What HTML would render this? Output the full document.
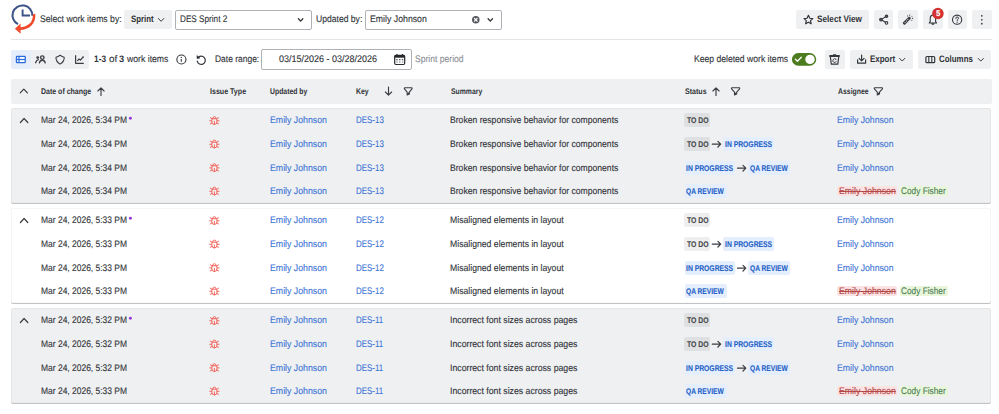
<!DOCTYPE html>
<html><head><meta charset="utf-8"><style>
html,body{margin:0;padding:0;background:#fff;width:999px;height:414px;overflow:hidden;position:relative}
div,svg{position:absolute;box-sizing:border-box}
span{position:absolute;font-family:"Liberation Sans",sans-serif;white-space:nowrap;transform-origin:0 0}
</style></head><body>
<div style="left:11.00px;top:38.60px;width:980.50px;height:1.00px;background:#e3e4e6"></div><div style="left:124.00px;top:10.00px;width:48.00px;height:19.20px;background:#eff0f2;border-radius:2px"></div><div style="left:174.70px;top:10.00px;width:137.10px;height:19.50px;border:1px solid #aeb1b6;border-radius:2px"></div><div style="left:365.00px;top:10.00px;width:136.80px;height:19.50px;border:1px solid #aeb1b6;border-radius:2px"></div><div style="left:796.00px;top:10.00px;width:72.60px;height:19.40px;background:#eff0f2;border-radius:2px"></div><div style="left:873.90px;top:10.00px;width:19.60px;height:19.40px;background:#eff0f2;border-radius:2px"></div><div style="left:898.40px;top:10.00px;width:19.60px;height:19.40px;background:#eff0f2;border-radius:2px"></div><div style="left:923.00px;top:10.00px;width:19.60px;height:19.40px;background:#eff0f2;border-radius:2px"></div><div style="left:947.50px;top:10.00px;width:19.60px;height:19.40px;background:#eff0f2;border-radius:2px"></div><div style="left:972.00px;top:10.00px;width:19.60px;height:19.40px;background:#eff0f2;border-radius:2px"></div><div style="left:11.10px;top:49.80px;width:77.80px;height:19.10px;background:#eff0f2;border-radius:2px"></div><div style="left:11.10px;top:49.80px;width:19.60px;height:19.10px;background:#e6eefb;border-radius:2px 0 0 2px"></div><div style="left:260.90px;top:49.40px;width:151.30px;height:20.20px;border:1px solid #aeb1b6;border-radius:2px"></div><div style="left:825.00px;top:49.80px;width:19.50px;height:19.20px;background:#eff0f2;border-radius:2px"></div><div style="left:849.90px;top:49.80px;width:63.00px;height:19.10px;background:#eff0f2;border-radius:2px"></div><div style="left:918.00px;top:49.80px;width:73.20px;height:19.10px;background:#eff0f2;border-radius:2px"></div><div style="left:11.10px;top:79.30px;width:980.60px;height:24.30px;background:#eff0f2;border-radius:2px"></div><div style="left:11.00px;top:108.40px;width:980.00px;height:94.80px;background:#eff0f2;border:1px solid rgba(0,0,0,0.04);border-bottom:1px solid rgba(0,0,0,0.02);border-radius:2px;box-shadow:0 1px 0 #c0c2c6"></div><div style="left:684.40px;top:113.10px;width:25.80px;height:14.40px;background:rgba(0,0,0,0.065);border-radius:2px"></div><div style="left:684.40px;top:137.10px;width:25.80px;height:14.40px;background:rgba(0,0,0,0.065);border-radius:2px"></div><div style="left:722.90px;top:137.10px;width:50.80px;height:14.40px;background:#e5eefc;border-radius:2px"></div><div style="left:684.50px;top:161.10px;width:50.80px;height:14.40px;background:#e5eefc;border-radius:2px"></div><div style="left:748.20px;top:161.10px;width:42.10px;height:14.40px;background:#e5eefc;border-radius:2px"></div><div style="left:684.50px;top:184.10px;width:42.10px;height:14.40px;background:#e5eefc;border-radius:2px"></div><div style="left:837.40px;top:185.80px;width:59.60px;height:10.20px;background:#fbe3e3;border-radius:2px"></div><div style="left:899.60px;top:185.80px;width:48.20px;height:10.20px;background:#eaf6da;border-radius:2px"></div><div style="left:11.00px;top:208.40px;width:980.00px;height:94.80px;background:#ffffff;border:1px solid rgba(0,0,0,0.04);border-bottom:1px solid rgba(0,0,0,0.02);border-radius:2px;box-shadow:0 1px 0 #c0c2c6"></div><div style="left:684.40px;top:213.10px;width:25.80px;height:14.40px;background:rgba(0,0,0,0.065);border-radius:2px"></div><div style="left:684.40px;top:237.10px;width:25.80px;height:14.40px;background:rgba(0,0,0,0.065);border-radius:2px"></div><div style="left:722.90px;top:237.10px;width:50.80px;height:14.40px;background:#e5eefc;border-radius:2px"></div><div style="left:684.50px;top:261.10px;width:50.80px;height:14.40px;background:#e5eefc;border-radius:2px"></div><div style="left:748.20px;top:261.10px;width:42.10px;height:14.40px;background:#e5eefc;border-radius:2px"></div><div style="left:684.50px;top:284.10px;width:42.10px;height:14.40px;background:#e5eefc;border-radius:2px"></div><div style="left:837.40px;top:285.80px;width:59.60px;height:10.20px;background:#fbe3e3;border-radius:2px"></div><div style="left:899.60px;top:285.80px;width:48.20px;height:10.20px;background:#eaf6da;border-radius:2px"></div><div style="left:11.00px;top:308.40px;width:980.00px;height:94.80px;background:#eff0f2;border:1px solid rgba(0,0,0,0.04);border-bottom:1px solid rgba(0,0,0,0.02);border-radius:2px;box-shadow:0 1px 0 #c0c2c6"></div><div style="left:684.40px;top:313.10px;width:25.80px;height:14.40px;background:rgba(0,0,0,0.065);border-radius:2px"></div><div style="left:684.40px;top:337.10px;width:25.80px;height:14.40px;background:rgba(0,0,0,0.065);border-radius:2px"></div><div style="left:722.90px;top:337.10px;width:50.80px;height:14.40px;background:#e5eefc;border-radius:2px"></div><div style="left:684.50px;top:361.10px;width:50.80px;height:14.40px;background:#e5eefc;border-radius:2px"></div><div style="left:748.20px;top:361.10px;width:42.10px;height:14.40px;background:#e5eefc;border-radius:2px"></div><div style="left:684.50px;top:384.10px;width:42.10px;height:14.40px;background:#e5eefc;border-radius:2px"></div><div style="left:837.40px;top:385.80px;width:59.60px;height:10.20px;background:#fbe3e3;border-radius:2px"></div><div style="left:899.60px;top:385.80px;width:48.20px;height:10.20px;background:#eaf6da;border-radius:2px"></div>
<svg width="999" height="414" style="left:0;top:0"><path d="M20.40 122.50 L24.10 118.50 L27.80 122.50" fill="none" stroke="#3a3d42" stroke-width="1.2" stroke-linecap="round" stroke-linejoin="round"/><circle cx="130.4" cy="118.30" r="1.45" fill="#9b35d6"/><path d="M712.3 144.2 L720.4000000000001 144.2 M717.9000000000001 141.39999999999998 L720.7 144.2 L717.9000000000001 147.0" fill="none" stroke="#3a3d42" stroke-width="1.2" stroke-linecap="round" stroke-linejoin="round"/><path d="M737.5 168.2 L745.5 168.2 M743.0 165.39999999999998 L745.8 168.2 L743.0 171.0" fill="none" stroke="#3a3d42" stroke-width="1.2" stroke-linecap="round" stroke-linejoin="round"/><g transform="translate(208.16 114.05) scale(0.52)" fill="none" stroke="#f0625a" stroke-width="1.85" stroke-linecap="round" stroke-linejoin="round"><path d="M9 9v-1a3 3 0 0 1 6 0v1"/><path d="M8 9h8a6 6 0 0 1 1 3v3a5 5 0 0 1 -10 0v-3a6 6 0 0 1 1 -3"/><path d="M3 13h4M17 13h4M12 20v-6M4 19l3.35 -2M20 19l-3.35 -2M4 7l3.75 2.4M20 7l-3.75 2.4"/></g><g transform="translate(208.16 137.50) scale(0.52)" fill="none" stroke="#f0625a" stroke-width="1.85" stroke-linecap="round" stroke-linejoin="round"><path d="M9 9v-1a3 3 0 0 1 6 0v1"/><path d="M8 9h8a6 6 0 0 1 1 3v3a5 5 0 0 1 -10 0v-3a6 6 0 0 1 1 -3"/><path d="M3 13h4M17 13h4M12 20v-6M4 19l3.35 -2M20 19l-3.35 -2M4 7l3.75 2.4M20 7l-3.75 2.4"/></g><g transform="translate(208.16 161.10) scale(0.52)" fill="none" stroke="#f0625a" stroke-width="1.85" stroke-linecap="round" stroke-linejoin="round"><path d="M9 9v-1a3 3 0 0 1 6 0v1"/><path d="M8 9h8a6 6 0 0 1 1 3v3a5 5 0 0 1 -10 0v-3a6 6 0 0 1 1 -3"/><path d="M3 13h4M17 13h4M12 20v-6M4 19l3.35 -2M20 19l-3.35 -2M4 7l3.75 2.4M20 7l-3.75 2.4"/></g><g transform="translate(208.16 184.50) scale(0.52)" fill="none" stroke="#f0625a" stroke-width="1.85" stroke-linecap="round" stroke-linejoin="round"><path d="M9 9v-1a3 3 0 0 1 6 0v1"/><path d="M8 9h8a6 6 0 0 1 1 3v3a5 5 0 0 1 -10 0v-3a6 6 0 0 1 1 -3"/><path d="M3 13h4M17 13h4M12 20v-6M4 19l3.35 -2M20 19l-3.35 -2M4 7l3.75 2.4M20 7l-3.75 2.4"/></g><path d="M20.40 222.50 L24.10 218.50 L27.80 222.50" fill="none" stroke="#3a3d42" stroke-width="1.2" stroke-linecap="round" stroke-linejoin="round"/><circle cx="130.4" cy="218.30" r="1.45" fill="#9b35d6"/><path d="M712.3 244.2 L720.4000000000001 244.2 M717.9000000000001 241.39999999999998 L720.7 244.2 L717.9000000000001 247.0" fill="none" stroke="#3a3d42" stroke-width="1.2" stroke-linecap="round" stroke-linejoin="round"/><path d="M737.5 268.2 L745.5 268.2 M743.0 265.4 L745.8 268.2 L743.0 271.0" fill="none" stroke="#3a3d42" stroke-width="1.2" stroke-linecap="round" stroke-linejoin="round"/><g transform="translate(208.16 214.05) scale(0.52)" fill="none" stroke="#f0625a" stroke-width="1.85" stroke-linecap="round" stroke-linejoin="round"><path d="M9 9v-1a3 3 0 0 1 6 0v1"/><path d="M8 9h8a6 6 0 0 1 1 3v3a5 5 0 0 1 -10 0v-3a6 6 0 0 1 1 -3"/><path d="M3 13h4M17 13h4M12 20v-6M4 19l3.35 -2M20 19l-3.35 -2M4 7l3.75 2.4M20 7l-3.75 2.4"/></g><g transform="translate(208.16 237.50) scale(0.52)" fill="none" stroke="#f0625a" stroke-width="1.85" stroke-linecap="round" stroke-linejoin="round"><path d="M9 9v-1a3 3 0 0 1 6 0v1"/><path d="M8 9h8a6 6 0 0 1 1 3v3a5 5 0 0 1 -10 0v-3a6 6 0 0 1 1 -3"/><path d="M3 13h4M17 13h4M12 20v-6M4 19l3.35 -2M20 19l-3.35 -2M4 7l3.75 2.4M20 7l-3.75 2.4"/></g><g transform="translate(208.16 261.10) scale(0.52)" fill="none" stroke="#f0625a" stroke-width="1.85" stroke-linecap="round" stroke-linejoin="round"><path d="M9 9v-1a3 3 0 0 1 6 0v1"/><path d="M8 9h8a6 6 0 0 1 1 3v3a5 5 0 0 1 -10 0v-3a6 6 0 0 1 1 -3"/><path d="M3 13h4M17 13h4M12 20v-6M4 19l3.35 -2M20 19l-3.35 -2M4 7l3.75 2.4M20 7l-3.75 2.4"/></g><g transform="translate(208.16 284.50) scale(0.52)" fill="none" stroke="#f0625a" stroke-width="1.85" stroke-linecap="round" stroke-linejoin="round"><path d="M9 9v-1a3 3 0 0 1 6 0v1"/><path d="M8 9h8a6 6 0 0 1 1 3v3a5 5 0 0 1 -10 0v-3a6 6 0 0 1 1 -3"/><path d="M3 13h4M17 13h4M12 20v-6M4 19l3.35 -2M20 19l-3.35 -2M4 7l3.75 2.4M20 7l-3.75 2.4"/></g><path d="M20.40 322.50 L24.10 318.50 L27.80 322.50" fill="none" stroke="#3a3d42" stroke-width="1.2" stroke-linecap="round" stroke-linejoin="round"/><circle cx="130.4" cy="318.30" r="1.45" fill="#9b35d6"/><path d="M712.3 344.2 L720.4000000000001 344.2 M717.9000000000001 341.4 L720.7 344.2 L717.9000000000001 347.0" fill="none" stroke="#3a3d42" stroke-width="1.2" stroke-linecap="round" stroke-linejoin="round"/><path d="M737.5 368.2 L745.5 368.2 M743.0 365.4 L745.8 368.2 L743.0 371.0" fill="none" stroke="#3a3d42" stroke-width="1.2" stroke-linecap="round" stroke-linejoin="round"/><g transform="translate(208.16 314.05) scale(0.52)" fill="none" stroke="#f0625a" stroke-width="1.85" stroke-linecap="round" stroke-linejoin="round"><path d="M9 9v-1a3 3 0 0 1 6 0v1"/><path d="M8 9h8a6 6 0 0 1 1 3v3a5 5 0 0 1 -10 0v-3a6 6 0 0 1 1 -3"/><path d="M3 13h4M17 13h4M12 20v-6M4 19l3.35 -2M20 19l-3.35 -2M4 7l3.75 2.4M20 7l-3.75 2.4"/></g><g transform="translate(208.16 337.50) scale(0.52)" fill="none" stroke="#f0625a" stroke-width="1.85" stroke-linecap="round" stroke-linejoin="round"><path d="M9 9v-1a3 3 0 0 1 6 0v1"/><path d="M8 9h8a6 6 0 0 1 1 3v3a5 5 0 0 1 -10 0v-3a6 6 0 0 1 1 -3"/><path d="M3 13h4M17 13h4M12 20v-6M4 19l3.35 -2M20 19l-3.35 -2M4 7l3.75 2.4M20 7l-3.75 2.4"/></g><g transform="translate(208.16 361.10) scale(0.52)" fill="none" stroke="#f0625a" stroke-width="1.85" stroke-linecap="round" stroke-linejoin="round"><path d="M9 9v-1a3 3 0 0 1 6 0v1"/><path d="M8 9h8a6 6 0 0 1 1 3v3a5 5 0 0 1 -10 0v-3a6 6 0 0 1 1 -3"/><path d="M3 13h4M17 13h4M12 20v-6M4 19l3.35 -2M20 19l-3.35 -2M4 7l3.75 2.4M20 7l-3.75 2.4"/></g><g transform="translate(208.16 384.50) scale(0.52)" fill="none" stroke="#f0625a" stroke-width="1.85" stroke-linecap="round" stroke-linejoin="round"><path d="M9 9v-1a3 3 0 0 1 6 0v1"/><path d="M8 9h8a6 6 0 0 1 1 3v3a5 5 0 0 1 -10 0v-3a6 6 0 0 1 1 -3"/><path d="M3 13h4M17 13h4M12 20v-6M4 19l3.35 -2M20 19l-3.35 -2M4 7l3.75 2.4M20 7l-3.75 2.4"/></g><g fill="none" stroke-linecap="butt"><path d="M18.0 24.2 A9.9 9.9 0 1 1 32.3 15.8" stroke="#3b5387" stroke-width="2.0"/><path d="M22.6 9.4 L22.6 15.5 L30.0 15.5" stroke="#3b5387" stroke-width="1.9"/><path d="M34.0 14.0 C35.0 22.6 28.6 28.6 19.8 28.6" stroke="#f04b2c" stroke-width="2.6"/></g><path d="M14.9 28.7 L20.6 23.4 L20.6 33.8 Z" fill="#f04b2c"/><path d="M158.40 18.50 L161.10 21.30 L163.80 18.50" fill="none" stroke="#3a3d42" stroke-width="1.0" stroke-linecap="round" stroke-linejoin="round"/><path d="M298.40 18.70 L300.60 21.10 L302.80 18.70" fill="none" stroke="#2e3135" stroke-width="1.3" stroke-linecap="round" stroke-linejoin="round"/><circle cx="475.8" cy="19.8" r="3.75" fill="#55585e"/><path d="M474.5 18.5 L477.1 21.1 M477.1 18.5 L474.5 21.1" stroke="#fff" stroke-width="1.25" stroke-linecap="round"/><path d="M488.10 18.70 L490.30 21.10 L492.50 18.70" fill="none" stroke="#2e3135" stroke-width="1.3" stroke-linecap="round" stroke-linejoin="round"/><path d="M808.4 15.3 L809.8 18.3 L812.8 18.6 L810.5 20.7 L811.2 23.8 L808.4 22.2 L805.6 23.8 L806.3 20.7 L804.0 18.6 L807.0 18.3 Z" fill="none" stroke="#2f3237" stroke-width="1.15" stroke-linejoin="round"/><g stroke="#33363b" stroke-width="1.05"><path d="M882.2 18.9 L885.4 17.0 M882.2 20.3 L885.4 22.2" fill="none"/><circle cx="881.0" cy="19.6" r="1.35" fill="#5a5d62"/><circle cx="886.5" cy="16.3" r="1.3" fill="#5a5d62"/><circle cx="886.5" cy="22.9" r="1.3" fill="#eff0f2"/></g><g transform="translate(906.9 20.6) rotate(-45)"><rect x="-4.9" y="-1.45" width="9.6" height="2.9" rx="1.0" fill="#3a3d42"/><g fill="#fff"><circle cx="-2.6" cy="0" r="0.5"/><circle cx="-0.6" cy="0" r="0.5"/><circle cx="1.4" cy="0" r="0.5"/></g></g><g fill="#44474c"><circle cx="907.6" cy="15.9" r="0.55"/><circle cx="909.6" cy="15.1" r="0.6"/><circle cx="911.9" cy="16.2" r="0.55"/><circle cx="912.6" cy="18.4" r="0.6"/><circle cx="911.8" cy="20.3" r="0.55"/></g><path d="M929.2 23.0 L936.6 23.0 L935.6 21.6 L935.6 18.6 C935.6 16.4 934.4 15.1 932.9 15.1 C931.4 15.1 930.2 16.4 930.2 18.6 L930.2 21.6 Z" fill="none" stroke="#33363b" stroke-width="1.1" stroke-linejoin="round"/><path d="M931.6 23.8 Q932.9 25.2 934.2 23.8 Z" fill="#33363b" stroke="#33363b" stroke-width="0.8"/><circle cx="937.9" cy="13.5" r="5.75" fill="#d3302f"/><circle cx="957.1" cy="19.7" r="4.6" fill="none" stroke="#33363b" stroke-width="1.1"/><path d="M955.8 18.5 Q955.8 16.9 957.15 16.9 Q958.5 16.9 958.5 18.2 Q958.5 19.0 957.7 19.4 Q957.15 19.8 957.15 20.6" fill="none" stroke="#33363b" stroke-width="1.0" stroke-linecap="round"/><circle cx="957.15" cy="22.2" r="0.6" fill="#33363b"/><g fill="#33363b"><circle cx="981.8" cy="15.8" r="0.85"/><circle cx="981.8" cy="19.75" r="0.85"/><circle cx="981.8" cy="23.7" r="0.85"/></g><rect x="15.8" y="55.8" width="10.1" height="7.4" rx="1.3" fill="#2b6de0"/><g fill="#fff"><rect x="17.1" y="57.0" width="1.3" height="1.9"/><rect x="19.6" y="57.0" width="5.0" height="1.9"/><rect x="17.1" y="60.1" width="1.3" height="1.9"/><rect x="19.6" y="60.1" width="5.0" height="1.9"/></g><g fill="none" stroke="#3a3d42" stroke-width="1.35" stroke-linecap="round"><circle cx="42.3" cy="57.6" r="1.75"/><path d="M39.4 62.9 Q40.0 60.2 42.3 60.2 Q44.6 60.2 45.2 62.9"/><path d="M35.6 62.7 Q36.4 60.2 38.3 59.7"/></g><circle cx="37.7" cy="57.6" r="1.4" fill="#3a3d42"/><path d="M60.1 55.2 Q62.2 56.7 64.2 57.2 Q64.5 61.5 60.1 64.1 Q55.7 61.5 56.0 57.2 Q58.0 56.7 60.1 55.2 Z" fill="none" stroke="#3a3d42" stroke-width="1.1" stroke-linejoin="round"/><path d="M75.6 55.2 L75.6 63.3 L83.8 63.3" fill="none" stroke="#3a3d42" stroke-width="1.2" stroke-linejoin="round"/><path d="M77.3 60.9 L79.1 59.0 L80.5 60.0 L82.6 57.6" fill="none" stroke="#3a3d42" stroke-width="1.2" stroke-linejoin="round"/><circle cx="83.0" cy="57.2" r="0.9" fill="#3a3d42"/><circle cx="181.4" cy="59.5" r="4.55" fill="none" stroke="#33363b" stroke-width="1.1"/><circle cx="181.3" cy="57.4" r="0.65" fill="#33363b"/><path d="M181.3 58.9 L181.3 61.8" stroke="#33363b" stroke-width="1.1"/><path d="M197.8 58.0 A4.1 4.1 0 1 1 197.2 61.2" fill="none" stroke="#33363b" stroke-width="1.2" stroke-linecap="round"/><path d="M196.9 55.6 L197.1 58.6 L199.9 58.0 Z" fill="#33363b" stroke="#33363b" stroke-width="0.6" stroke-linejoin="round"/><rect x="394.7" y="55.3" width="10.0" height="9.2" rx="1.2" fill="none" stroke="#26292d" stroke-width="1.2"/><rect x="394.7" y="55.3" width="10.0" height="2.4" fill="#26292d"/><path d="M396.9 53.9 L396.9 56 M402.5 53.9 L402.5 56" stroke="#26292d" stroke-width="1.2"/><g fill="#3a3d42"><rect x="396.2" y="59.2" width="1.5" height="1.1"/><rect x="399.0" y="59.2" width="1.5" height="1.1"/><rect x="401.8" y="59.2" width="1.5" height="1.1"/><rect x="396.2" y="61.5" width="1.5" height="1.1" fill="#8a8d92"/><rect x="399.0" y="61.5" width="1.5" height="1.1" fill="#8a8d92"/><rect x="401.8" y="61.5" width="1.5" height="1.1" fill="#8a8d92"/></g><rect x="791.9" y="53.1" width="24.3" height="12.6" rx="6.3" fill="#4d7c1e"/><circle cx="810.0" cy="59.4" r="4.7" fill="#fff"/><path d="M795.4 59.3 L797.4 61.2 L801.3 57.3" fill="none" stroke="#fff" stroke-width="1.3" stroke-linecap="round" stroke-linejoin="round"/><rect x="829.2" y="55.1" width="10.7" height="1.9" rx="0.7" fill="#33363b"/><rect x="832.9" y="54.3" width="3.3" height="1.2" rx="0.4" fill="#33363b"/><path d="M830.4 57.0 L831.3 64.2 L837.8 64.2 L838.7 57.0" fill="none" stroke="#33363b" stroke-width="1.2" stroke-linejoin="round"/><path d="M835.9 59.4 A1.8 1.8 0 1 0 836.3 61.2" fill="none" stroke="#33363b" stroke-width="0.9"/><path d="M835.2 58.6 L836.6 59.0 L836.0 60.3 Z" fill="#33363b"/><path d="M857.6 59.8 L857.6 63.2 L865.6 63.2 L865.6 59.8" fill="none" stroke="#33363b" stroke-width="1.2" stroke-linejoin="round" stroke-linecap="round"/><path d="M861.6 55.0 L861.6 60.8 M859.1 58.4 L861.6 60.9 L864.1 58.4" fill="none" stroke="#33363b" stroke-width="1.2" stroke-linecap="round" stroke-linejoin="round"/><path d="M899.60 58.35 L902.20 61.05 L904.80 58.35" fill="none" stroke="#3a3d42" stroke-width="1.0" stroke-linecap="round" stroke-linejoin="round"/><rect x="925.9" y="56.5" width="8.8" height="6.2" rx="1" fill="none" stroke="#33363b" stroke-width="1.2"/><path d="M928.8 56.5 L928.8 62.7 M931.8 56.5 L931.8 62.7" stroke="#33363b" stroke-width="1.1"/><path d="M978.20 58.45 L980.80 61.15 L983.40 58.45" fill="none" stroke="#3a3d42" stroke-width="1.0" stroke-linecap="round" stroke-linejoin="round"/><path d="M20.20 92.90 L23.80 89.10 L27.40 92.90" fill="none" stroke="#3a3d42" stroke-width="1.2" stroke-linecap="round" stroke-linejoin="round"/><path d="M101.0 95.5 L101.0 88.2 M97.9 91.0 L101.0 87.9 L104.1 91.0" fill="none" stroke="#3a3d42" stroke-width="1.15" stroke-linecap="round" stroke-linejoin="round"/><path d="M388.5 87.1 L388.5 94.8 M385.4 92.0 L388.5 95.1 L391.6 92.0" fill="none" stroke="#3a3d42" stroke-width="1.15" stroke-linecap="round" stroke-linejoin="round"/><path d="M404.80 87.80 L411.70 87.80 Q412.40 87.90 412.00 88.90 L409.35 92.07 L409.35 94.10 L407.15 95.00 L407.15 92.07 L404.50 88.90 Q404.10 87.90 404.80 87.80 Z" fill="none" stroke="#3a3d42" stroke-width="1.1" stroke-linejoin="round"/><path d="M407.35 92.80 L409.15 92.40 L409.15 94.10 L407.35 94.80 Z" fill="#3a3d42"/><path d="M716.0 95.5 L716.0 88.2 M712.9 91.0 L716.0 87.9 L719.1 91.0" fill="none" stroke="#3a3d42" stroke-width="1.15" stroke-linecap="round" stroke-linejoin="round"/><path d="M731.90 87.80 L739.30 87.80 Q740.00 87.90 739.60 88.90 L736.70 92.07 L736.70 94.10 L734.50 95.00 L734.50 92.07 L731.60 88.90 Q731.20 87.90 731.90 87.80 Z" fill="none" stroke="#3a3d42" stroke-width="1.1" stroke-linejoin="round"/><path d="M734.70 92.80 L736.50 92.40 L736.50 94.10 L734.70 94.80 Z" fill="#3a3d42"/><path d="M874.70 87.80 L882.10 87.80 Q882.80 87.90 882.40 88.90 L879.50 92.07 L879.50 94.10 L877.30 95.00 L877.30 92.07 L874.40 88.90 Q874.00 87.90 874.70 87.80 Z" fill="none" stroke="#3a3d42" stroke-width="1.1" stroke-linejoin="round"/><path d="M877.50 92.80 L879.30 92.40 L879.30 94.10 L877.50 94.80 Z" fill="#3a3d42"/></svg>
<span style="left:40.13px;top:14px;font-size:9.6px;line-height:9.6px;font-weight:400;color:#303338;transform:matrix(0.9003,0,0.001,1,0,0);-webkit-text-stroke:0.12px currentColor;">Select work items by:</span><span style="left:130.98px;top:14px;font-size:9.4px;line-height:9.4px;font-weight:700;color:#303338;transform:matrix(0.8383,0,0.001,1,0,0);">Sprint</span><span style="left:180.06px;top:14px;font-size:9.6px;line-height:9.6px;font-weight:400;color:#303338;transform:matrix(0.8519,0,0.001,1,0,0);-webkit-text-stroke:0.12px currentColor;">DES Sprint 2</span><span style="left:316.46px;top:14px;font-size:9.6px;line-height:9.6px;font-weight:400;color:#303338;transform:matrix(0.8946,0,0.001,1,0,0);-webkit-text-stroke:0.12px currentColor;">Updated by:</span><span style="left:369.62px;top:14px;font-size:9.6px;line-height:9.6px;font-weight:400;color:#303338;transform:matrix(0.9110,0,0.001,1,0,0);-webkit-text-stroke:0.12px currentColor;">Emily Johnson</span><span style="left:816.87px;top:14px;font-size:9.4px;line-height:9.4px;font-weight:700;color:#303338;transform:matrix(0.8748,0,0.001,1,0,0);">Select View</span><span style="left:94.38px;top:54px;font-size:9.4px;line-height:9.4px;font-weight:700;color:#303338;transform:matrix(0.8892,0,0.001,1,0,0);">1-3</span><span style="left:108.59px;top:54px;font-size:9.6px;line-height:9.6px;font-weight:400;color:#303338;transform:matrix(1.0337,0,0.001,1,0,0);-webkit-text-stroke:0.12px currentColor;">of</span><span style="left:119.15px;top:54px;font-size:9.4px;line-height:9.4px;font-weight:700;color:#303338;transform:matrix(0.9903,0,0.001,1,0,0);">3</span><span style="left:127.14px;top:54px;font-size:9.6px;line-height:9.6px;font-weight:400;color:#303338;transform:matrix(0.9033,0,0.001,1,0,0);-webkit-text-stroke:0.12px currentColor;">work items</span><span style="left:215.24px;top:54px;font-size:9.6px;line-height:9.6px;font-weight:400;color:#303338;transform:matrix(0.8816,0,0.001,1,0,0);-webkit-text-stroke:0.12px currentColor;">Date range:</span><span style="left:278.62px;top:54px;font-size:9.6px;line-height:9.6px;font-weight:400;color:#303338;transform:matrix(0.9362,0,0.001,1,0,0);-webkit-text-stroke:0.12px currentColor;">03/15/2026 - 03/28/2026</span><span style="left:414.93px;top:54px;font-size:9.6px;line-height:9.6px;font-weight:400;color:#8d9096;transform:matrix(0.8938,0,0.001,1,0,0);-webkit-text-stroke:0.12px currentColor;">Sprint period</span><span style="left:693.83px;top:54px;font-size:9.6px;line-height:9.6px;font-weight:400;color:#303338;transform:matrix(0.8955,0,0.001,1,0,0);-webkit-text-stroke:0.12px currentColor;">Keep deleted work items</span><span style="left:869.80px;top:54px;font-size:9.4px;line-height:9.4px;font-weight:700;color:#303338;transform:matrix(0.8477,0,0.001,1,0,0);">Export</span><span style="left:939.25px;top:54px;font-size:9.4px;line-height:9.4px;font-weight:700;color:#303338;transform:matrix(0.8448,0,0.001,1,0,0);">Columns</span><span style="left:41.16px;top:88px;font-size:8.2px;line-height:8.2px;font-weight:700;color:#303338;transform:matrix(0.8543,0,0.001,1,0,0);">Date of change</span><span style="left:209.76px;top:88px;font-size:8.2px;line-height:8.2px;font-weight:700;color:#303338;transform:matrix(0.8646,0,0.001,1,0,0);">Issue Type</span><span style="left:270.38px;top:88px;font-size:8.2px;line-height:8.2px;font-weight:700;color:#303338;transform:matrix(0.8372,0,0.001,1,0,0);">Updated by</span><span style="left:356.37px;top:88px;font-size:8.2px;line-height:8.2px;font-weight:700;color:#303338;transform:matrix(0.8435,0,0.001,1,0,0);">Key</span><span style="left:451.19px;top:88px;font-size:8.2px;line-height:8.2px;font-weight:700;color:#303338;transform:matrix(0.8365,0,0.001,1,0,0);">Summary</span><span style="left:684.89px;top:88px;font-size:8.2px;line-height:8.2px;font-weight:700;color:#303338;transform:matrix(0.8618,0,0.001,1,0,0);">Status</span><span style="left:837.99px;top:88px;font-size:8.2px;line-height:8.2px;font-weight:700;color:#303338;transform:matrix(0.8415,0,0.001,1,0,0);">Assignee</span><span style="left:936.18px;top:9px;font-size:8.3px;line-height:8.3px;font-weight:700;color:#ffffff;transform:matrix(0.9580,0,0.001,1,0,0);-webkit-text-stroke:0.1px currentColor;">5</span><span style="left:686.60px;top:116px;font-size:8.3px;line-height:8.3px;font-weight:700;color:#44474c;transform:matrix(0.8301,0,0.001,1,0,0);-webkit-text-stroke:0.1px currentColor;">TO DO</span><span style="left:686.60px;top:140px;font-size:8.3px;line-height:8.3px;font-weight:700;color:#44474c;transform:matrix(0.8301,0,0.001,1,0,0);-webkit-text-stroke:0.1px currentColor;">TO DO</span><span style="left:724.68px;top:140px;font-size:8.3px;line-height:8.3px;font-weight:700;color:#2260c6;transform:matrix(0.8170,0,0.001,1,0,0);-webkit-text-stroke:0.1px currentColor;">IN PROGRESS</span><span style="left:686.28px;top:164px;font-size:8.3px;line-height:8.3px;font-weight:700;color:#2260c6;transform:matrix(0.8170,0,0.001,1,0,0);-webkit-text-stroke:0.1px currentColor;">IN PROGRESS</span><span style="left:750.19px;top:164px;font-size:8.3px;line-height:8.3px;font-weight:700;color:#2260c6;transform:matrix(0.7989,0,0.001,1,0,0);-webkit-text-stroke:0.1px currentColor;">QA REVIEW</span><span style="left:686.49px;top:187px;font-size:8.3px;line-height:8.3px;font-weight:700;color:#2260c6;transform:matrix(0.7989,0,0.001,1,0,0);-webkit-text-stroke:0.1px currentColor;">QA REVIEW</span><span style="left:40.64px;top:115px;font-size:9.5px;line-height:9.5px;font-weight:400;color:#303338;transform:matrix(0.8902,0,0.001,1,0,0);-webkit-text-stroke:0.12px currentColor;">Mar 24, 2026, 5:34 PM</span><span style="left:269.62px;top:115px;font-size:9.5px;line-height:9.5px;font-weight:400;color:#3d75d6;transform:matrix(0.9206,0,0.001,1,0,0);-webkit-text-stroke:0.12px currentColor;">Emily Johnson</span><span style="left:356.08px;top:115px;font-size:9.5px;line-height:9.5px;font-weight:400;color:#3d75d6;transform:matrix(0.8370,0,0.001,1,0,0);-webkit-text-stroke:0.12px currentColor;">DES-13</span><span style="left:449.93px;top:115px;font-size:9.5px;line-height:9.5px;font-weight:400;color:#303338;transform:matrix(0.9056,0,0.001,1,0,0);-webkit-text-stroke:0.12px currentColor;">Broken responsive behavior for components</span><span style="left:837.12px;top:115px;font-size:9.5px;line-height:9.5px;font-weight:400;color:#3d75d6;transform:matrix(0.9140,0,0.001,1,0,0);-webkit-text-stroke:0.12px currentColor;">Emily Johnson</span><span style="left:40.64px;top:139px;font-size:9.5px;line-height:9.5px;font-weight:400;color:#303338;transform:matrix(0.8902,0,0.001,1,0,0);-webkit-text-stroke:0.12px currentColor;">Mar 24, 2026, 5:34 PM</span><span style="left:269.62px;top:139px;font-size:9.5px;line-height:9.5px;font-weight:400;color:#3d75d6;transform:matrix(0.9206,0,0.001,1,0,0);-webkit-text-stroke:0.12px currentColor;">Emily Johnson</span><span style="left:356.08px;top:139px;font-size:9.5px;line-height:9.5px;font-weight:400;color:#3d75d6;transform:matrix(0.8370,0,0.001,1,0,0);-webkit-text-stroke:0.12px currentColor;">DES-13</span><span style="left:449.93px;top:139px;font-size:9.5px;line-height:9.5px;font-weight:400;color:#303338;transform:matrix(0.9056,0,0.001,1,0,0);-webkit-text-stroke:0.12px currentColor;">Broken responsive behavior for components</span><span style="left:837.12px;top:139px;font-size:9.5px;line-height:9.5px;font-weight:400;color:#3d75d6;transform:matrix(0.9140,0,0.001,1,0,0);-webkit-text-stroke:0.12px currentColor;">Emily Johnson</span><span style="left:40.64px;top:163px;font-size:9.5px;line-height:9.5px;font-weight:400;color:#303338;transform:matrix(0.8902,0,0.001,1,0,0);-webkit-text-stroke:0.12px currentColor;">Mar 24, 2026, 5:34 PM</span><span style="left:269.62px;top:163px;font-size:9.5px;line-height:9.5px;font-weight:400;color:#3d75d6;transform:matrix(0.9206,0,0.001,1,0,0);-webkit-text-stroke:0.12px currentColor;">Emily Johnson</span><span style="left:356.08px;top:163px;font-size:9.5px;line-height:9.5px;font-weight:400;color:#3d75d6;transform:matrix(0.8370,0,0.001,1,0,0);-webkit-text-stroke:0.12px currentColor;">DES-13</span><span style="left:449.93px;top:163px;font-size:9.5px;line-height:9.5px;font-weight:400;color:#303338;transform:matrix(0.9056,0,0.001,1,0,0);-webkit-text-stroke:0.12px currentColor;">Broken responsive behavior for components</span><span style="left:837.12px;top:163px;font-size:9.5px;line-height:9.5px;font-weight:400;color:#3d75d6;transform:matrix(0.9140,0,0.001,1,0,0);-webkit-text-stroke:0.12px currentColor;">Emily Johnson</span><span style="left:40.64px;top:186px;font-size:9.5px;line-height:9.5px;font-weight:400;color:#303338;transform:matrix(0.8902,0,0.001,1,0,0);-webkit-text-stroke:0.12px currentColor;">Mar 24, 2026, 5:34 PM</span><span style="left:269.62px;top:186px;font-size:9.5px;line-height:9.5px;font-weight:400;color:#3d75d6;transform:matrix(0.9206,0,0.001,1,0,0);-webkit-text-stroke:0.12px currentColor;">Emily Johnson</span><span style="left:356.08px;top:186px;font-size:9.5px;line-height:9.5px;font-weight:400;color:#3d75d6;transform:matrix(0.8370,0,0.001,1,0,0);-webkit-text-stroke:0.12px currentColor;">DES-13</span><span style="left:449.93px;top:186px;font-size:9.5px;line-height:9.5px;font-weight:400;color:#303338;transform:matrix(0.9056,0,0.001,1,0,0);-webkit-text-stroke:0.12px currentColor;">Broken responsive behavior for components</span><span style="left:838.72px;top:186px;font-size:9.5px;line-height:9.5px;font-weight:400;color:#b54848;transform:matrix(0.9190,0,0.001,1,0,0);-webkit-text-stroke:0.12px currentColor;text-decoration:line-through">Emily Johnson</span><span style="left:901.21px;top:186px;font-size:9.5px;line-height:9.5px;font-weight:400;color:#4a8058;transform:matrix(0.8715,0,0.001,1,0,0);-webkit-text-stroke:0.12px currentColor;">Cody Fisher</span><span style="left:686.60px;top:216px;font-size:8.3px;line-height:8.3px;font-weight:700;color:#44474c;transform:matrix(0.8301,0,0.001,1,0,0);-webkit-text-stroke:0.1px currentColor;">TO DO</span><span style="left:686.60px;top:240px;font-size:8.3px;line-height:8.3px;font-weight:700;color:#44474c;transform:matrix(0.8301,0,0.001,1,0,0);-webkit-text-stroke:0.1px currentColor;">TO DO</span><span style="left:724.68px;top:240px;font-size:8.3px;line-height:8.3px;font-weight:700;color:#2260c6;transform:matrix(0.8170,0,0.001,1,0,0);-webkit-text-stroke:0.1px currentColor;">IN PROGRESS</span><span style="left:686.28px;top:264px;font-size:8.3px;line-height:8.3px;font-weight:700;color:#2260c6;transform:matrix(0.8170,0,0.001,1,0,0);-webkit-text-stroke:0.1px currentColor;">IN PROGRESS</span><span style="left:750.19px;top:264px;font-size:8.3px;line-height:8.3px;font-weight:700;color:#2260c6;transform:matrix(0.7989,0,0.001,1,0,0);-webkit-text-stroke:0.1px currentColor;">QA REVIEW</span><span style="left:686.49px;top:287px;font-size:8.3px;line-height:8.3px;font-weight:700;color:#2260c6;transform:matrix(0.7989,0,0.001,1,0,0);-webkit-text-stroke:0.1px currentColor;">QA REVIEW</span><span style="left:40.64px;top:215px;font-size:9.5px;line-height:9.5px;font-weight:400;color:#303338;transform:matrix(0.8902,0,0.001,1,0,0);-webkit-text-stroke:0.12px currentColor;">Mar 24, 2026, 5:33 PM</span><span style="left:269.62px;top:215px;font-size:9.5px;line-height:9.5px;font-weight:400;color:#3d75d6;transform:matrix(0.9206,0,0.001,1,0,0);-webkit-text-stroke:0.12px currentColor;">Emily Johnson</span><span style="left:356.08px;top:215px;font-size:9.5px;line-height:9.5px;font-weight:400;color:#3d75d6;transform:matrix(0.8370,0,0.001,1,0,0);-webkit-text-stroke:0.12px currentColor;">DES-12</span><span style="left:449.92px;top:215px;font-size:9.5px;line-height:9.5px;font-weight:400;color:#303338;transform:matrix(0.9119,0,0.001,1,0,0);-webkit-text-stroke:0.12px currentColor;">Misaligned elements in layout</span><span style="left:837.12px;top:215px;font-size:9.5px;line-height:9.5px;font-weight:400;color:#3d75d6;transform:matrix(0.9140,0,0.001,1,0,0);-webkit-text-stroke:0.12px currentColor;">Emily Johnson</span><span style="left:40.64px;top:239px;font-size:9.5px;line-height:9.5px;font-weight:400;color:#303338;transform:matrix(0.8902,0,0.001,1,0,0);-webkit-text-stroke:0.12px currentColor;">Mar 24, 2026, 5:33 PM</span><span style="left:269.62px;top:239px;font-size:9.5px;line-height:9.5px;font-weight:400;color:#3d75d6;transform:matrix(0.9206,0,0.001,1,0,0);-webkit-text-stroke:0.12px currentColor;">Emily Johnson</span><span style="left:356.08px;top:239px;font-size:9.5px;line-height:9.5px;font-weight:400;color:#3d75d6;transform:matrix(0.8370,0,0.001,1,0,0);-webkit-text-stroke:0.12px currentColor;">DES-12</span><span style="left:449.92px;top:239px;font-size:9.5px;line-height:9.5px;font-weight:400;color:#303338;transform:matrix(0.9119,0,0.001,1,0,0);-webkit-text-stroke:0.12px currentColor;">Misaligned elements in layout</span><span style="left:837.12px;top:239px;font-size:9.5px;line-height:9.5px;font-weight:400;color:#3d75d6;transform:matrix(0.9140,0,0.001,1,0,0);-webkit-text-stroke:0.12px currentColor;">Emily Johnson</span><span style="left:40.64px;top:263px;font-size:9.5px;line-height:9.5px;font-weight:400;color:#303338;transform:matrix(0.8902,0,0.001,1,0,0);-webkit-text-stroke:0.12px currentColor;">Mar 24, 2026, 5:33 PM</span><span style="left:269.62px;top:263px;font-size:9.5px;line-height:9.5px;font-weight:400;color:#3d75d6;transform:matrix(0.9206,0,0.001,1,0,0);-webkit-text-stroke:0.12px currentColor;">Emily Johnson</span><span style="left:356.08px;top:263px;font-size:9.5px;line-height:9.5px;font-weight:400;color:#3d75d6;transform:matrix(0.8370,0,0.001,1,0,0);-webkit-text-stroke:0.12px currentColor;">DES-12</span><span style="left:449.92px;top:263px;font-size:9.5px;line-height:9.5px;font-weight:400;color:#303338;transform:matrix(0.9119,0,0.001,1,0,0);-webkit-text-stroke:0.12px currentColor;">Misaligned elements in layout</span><span style="left:837.12px;top:263px;font-size:9.5px;line-height:9.5px;font-weight:400;color:#3d75d6;transform:matrix(0.9140,0,0.001,1,0,0);-webkit-text-stroke:0.12px currentColor;">Emily Johnson</span><span style="left:40.64px;top:286px;font-size:9.5px;line-height:9.5px;font-weight:400;color:#303338;transform:matrix(0.8902,0,0.001,1,0,0);-webkit-text-stroke:0.12px currentColor;">Mar 24, 2026, 5:33 PM</span><span style="left:269.62px;top:286px;font-size:9.5px;line-height:9.5px;font-weight:400;color:#3d75d6;transform:matrix(0.9206,0,0.001,1,0,0);-webkit-text-stroke:0.12px currentColor;">Emily Johnson</span><span style="left:356.08px;top:286px;font-size:9.5px;line-height:9.5px;font-weight:400;color:#3d75d6;transform:matrix(0.8370,0,0.001,1,0,0);-webkit-text-stroke:0.12px currentColor;">DES-12</span><span style="left:449.92px;top:286px;font-size:9.5px;line-height:9.5px;font-weight:400;color:#303338;transform:matrix(0.9119,0,0.001,1,0,0);-webkit-text-stroke:0.12px currentColor;">Misaligned elements in layout</span><span style="left:838.72px;top:286px;font-size:9.5px;line-height:9.5px;font-weight:400;color:#b54848;transform:matrix(0.9190,0,0.001,1,0,0);-webkit-text-stroke:0.12px currentColor;text-decoration:line-through">Emily Johnson</span><span style="left:901.21px;top:286px;font-size:9.5px;line-height:9.5px;font-weight:400;color:#4a8058;transform:matrix(0.8715,0,0.001,1,0,0);-webkit-text-stroke:0.12px currentColor;">Cody Fisher</span><span style="left:686.60px;top:316px;font-size:8.3px;line-height:8.3px;font-weight:700;color:#44474c;transform:matrix(0.8301,0,0.001,1,0,0);-webkit-text-stroke:0.1px currentColor;">TO DO</span><span style="left:686.60px;top:340px;font-size:8.3px;line-height:8.3px;font-weight:700;color:#44474c;transform:matrix(0.8301,0,0.001,1,0,0);-webkit-text-stroke:0.1px currentColor;">TO DO</span><span style="left:724.68px;top:340px;font-size:8.3px;line-height:8.3px;font-weight:700;color:#2260c6;transform:matrix(0.8170,0,0.001,1,0,0);-webkit-text-stroke:0.1px currentColor;">IN PROGRESS</span><span style="left:686.28px;top:364px;font-size:8.3px;line-height:8.3px;font-weight:700;color:#2260c6;transform:matrix(0.8170,0,0.001,1,0,0);-webkit-text-stroke:0.1px currentColor;">IN PROGRESS</span><span style="left:750.19px;top:364px;font-size:8.3px;line-height:8.3px;font-weight:700;color:#2260c6;transform:matrix(0.7989,0,0.001,1,0,0);-webkit-text-stroke:0.1px currentColor;">QA REVIEW</span><span style="left:686.49px;top:387px;font-size:8.3px;line-height:8.3px;font-weight:700;color:#2260c6;transform:matrix(0.7989,0,0.001,1,0,0);-webkit-text-stroke:0.1px currentColor;">QA REVIEW</span><span style="left:40.64px;top:315px;font-size:9.5px;line-height:9.5px;font-weight:400;color:#303338;transform:matrix(0.8902,0,0.001,1,0,0);-webkit-text-stroke:0.12px currentColor;">Mar 24, 2026, 5:32 PM</span><span style="left:269.62px;top:315px;font-size:9.5px;line-height:9.5px;font-weight:400;color:#3d75d6;transform:matrix(0.9206,0,0.001,1,0,0);-webkit-text-stroke:0.12px currentColor;">Emily Johnson</span><span style="left:356.08px;top:315px;font-size:9.5px;line-height:9.5px;font-weight:400;color:#3d75d6;transform:matrix(0.8367,0,0.001,1,0,0);-webkit-text-stroke:0.12px currentColor;">DES-11</span><span style="left:449.92px;top:315px;font-size:9.5px;line-height:9.5px;font-weight:400;color:#303338;transform:matrix(0.9171,0,0.001,1,0,0);-webkit-text-stroke:0.12px currentColor;">Incorrect font sizes across pages</span><span style="left:837.12px;top:315px;font-size:9.5px;line-height:9.5px;font-weight:400;color:#3d75d6;transform:matrix(0.9140,0,0.001,1,0,0);-webkit-text-stroke:0.12px currentColor;">Emily Johnson</span><span style="left:40.64px;top:339px;font-size:9.5px;line-height:9.5px;font-weight:400;color:#303338;transform:matrix(0.8902,0,0.001,1,0,0);-webkit-text-stroke:0.12px currentColor;">Mar 24, 2026, 5:32 PM</span><span style="left:269.62px;top:339px;font-size:9.5px;line-height:9.5px;font-weight:400;color:#3d75d6;transform:matrix(0.9206,0,0.001,1,0,0);-webkit-text-stroke:0.12px currentColor;">Emily Johnson</span><span style="left:356.08px;top:339px;font-size:9.5px;line-height:9.5px;font-weight:400;color:#3d75d6;transform:matrix(0.8367,0,0.001,1,0,0);-webkit-text-stroke:0.12px currentColor;">DES-11</span><span style="left:449.92px;top:339px;font-size:9.5px;line-height:9.5px;font-weight:400;color:#303338;transform:matrix(0.9171,0,0.001,1,0,0);-webkit-text-stroke:0.12px currentColor;">Incorrect font sizes across pages</span><span style="left:837.12px;top:339px;font-size:9.5px;line-height:9.5px;font-weight:400;color:#3d75d6;transform:matrix(0.9140,0,0.001,1,0,0);-webkit-text-stroke:0.12px currentColor;">Emily Johnson</span><span style="left:40.64px;top:363px;font-size:9.5px;line-height:9.5px;font-weight:400;color:#303338;transform:matrix(0.8902,0,0.001,1,0,0);-webkit-text-stroke:0.12px currentColor;">Mar 24, 2026, 5:32 PM</span><span style="left:269.62px;top:363px;font-size:9.5px;line-height:9.5px;font-weight:400;color:#3d75d6;transform:matrix(0.9206,0,0.001,1,0,0);-webkit-text-stroke:0.12px currentColor;">Emily Johnson</span><span style="left:356.08px;top:363px;font-size:9.5px;line-height:9.5px;font-weight:400;color:#3d75d6;transform:matrix(0.8367,0,0.001,1,0,0);-webkit-text-stroke:0.12px currentColor;">DES-11</span><span style="left:449.92px;top:363px;font-size:9.5px;line-height:9.5px;font-weight:400;color:#303338;transform:matrix(0.9171,0,0.001,1,0,0);-webkit-text-stroke:0.12px currentColor;">Incorrect font sizes across pages</span><span style="left:837.12px;top:363px;font-size:9.5px;line-height:9.5px;font-weight:400;color:#3d75d6;transform:matrix(0.9140,0,0.001,1,0,0);-webkit-text-stroke:0.12px currentColor;">Emily Johnson</span><span style="left:40.64px;top:386px;font-size:9.5px;line-height:9.5px;font-weight:400;color:#303338;transform:matrix(0.8902,0,0.001,1,0,0);-webkit-text-stroke:0.12px currentColor;">Mar 24, 2026, 5:33 PM</span><span style="left:269.62px;top:386px;font-size:9.5px;line-height:9.5px;font-weight:400;color:#3d75d6;transform:matrix(0.9206,0,0.001,1,0,0);-webkit-text-stroke:0.12px currentColor;">Emily Johnson</span><span style="left:356.08px;top:386px;font-size:9.5px;line-height:9.5px;font-weight:400;color:#3d75d6;transform:matrix(0.8367,0,0.001,1,0,0);-webkit-text-stroke:0.12px currentColor;">DES-11</span><span style="left:449.92px;top:386px;font-size:9.5px;line-height:9.5px;font-weight:400;color:#303338;transform:matrix(0.9171,0,0.001,1,0,0);-webkit-text-stroke:0.12px currentColor;">Incorrect font sizes across pages</span><span style="left:838.72px;top:386px;font-size:9.5px;line-height:9.5px;font-weight:400;color:#b54848;transform:matrix(0.9190,0,0.001,1,0,0);-webkit-text-stroke:0.12px currentColor;text-decoration:line-through">Emily Johnson</span><span style="left:901.21px;top:386px;font-size:9.5px;line-height:9.5px;font-weight:400;color:#4a8058;transform:matrix(0.8715,0,0.001,1,0,0);-webkit-text-stroke:0.12px currentColor;">Cody Fisher</span>
</body></html>
